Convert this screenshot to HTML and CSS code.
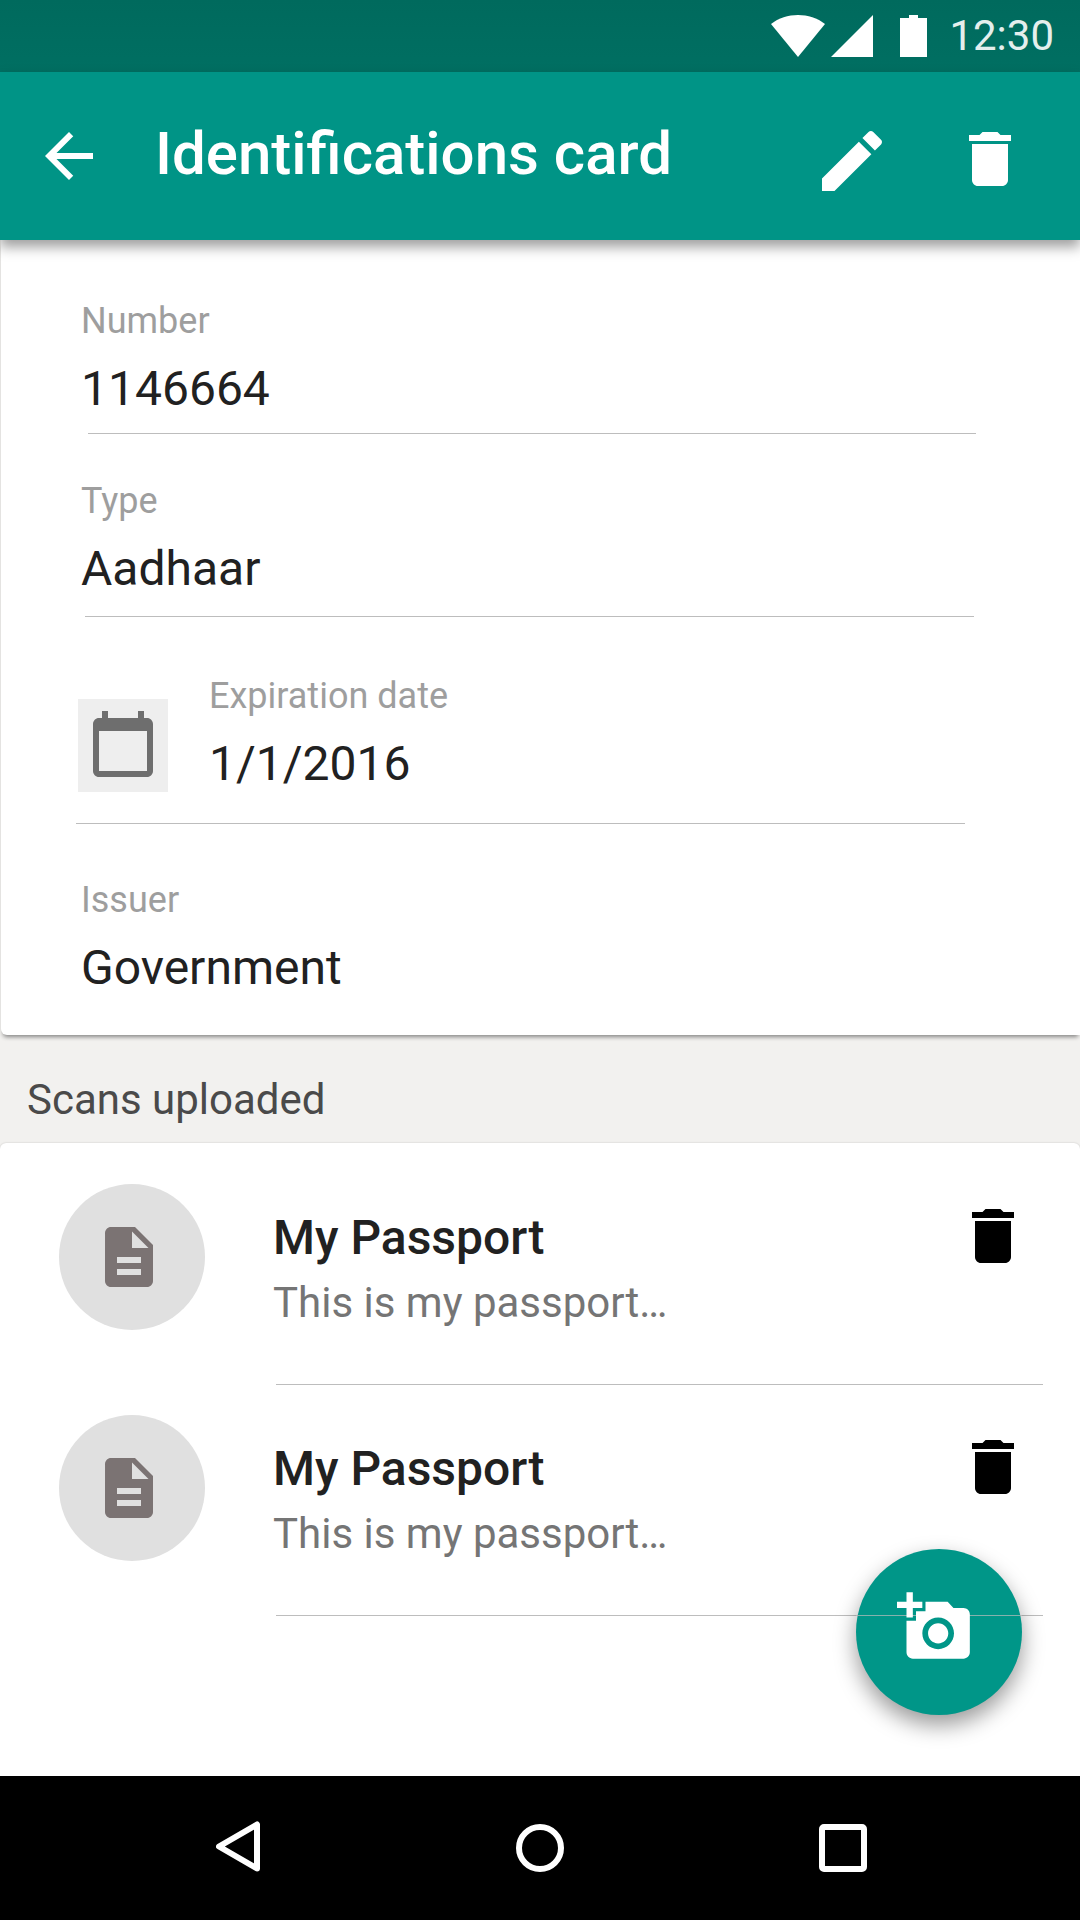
FILE: index.html
```html
<!DOCTYPE html>
<html lang="en">
<head>
    <meta charset="UTF-8">
    <meta name="viewport" content="width=device-width, initial-scale=1.0">
    <title>Identifications card</title>
    <link rel="stylesheet" href="styles.css">
</head>
<body>
    <div class="phone">
        <div class="status-bar">
            <svg class="status-wifi" viewBox="0 0 54 42"><path d="M0 9C15-3 39-3 54 9L27 42z"/></svg>
            <svg class="status-signal" viewBox="0 0 42 42"><path d="M42 0V42H0z"/></svg>
            <svg class="status-battery" viewBox="0 0 27 42"><path d="M9 0H18V3H27V42H0V3H9z"/></svg>
            <span class="status-time">12:30</span>
        </div>

        <header class="app-bar">
            <svg class="icon back-icon" viewBox="0 0 24 24"><path d="M20 11H7.83l5.59-5.59L12 4l-8 8 8 8 1.41-1.41L7.83 13H20v-2z"/></svg>
            <h1>Identifications card</h1>
            <svg class="icon edit-icon" viewBox="0 0 24 24"><path d="M3 17.25V21h3.75L17.81 9.94l-3.75-3.75L3 17.25zM20.71 7.04c.39-.39.39-1.02 0-1.41l-2.34-2.34c-.39-.39-1.02-.39-1.41 0l-1.83 1.83 3.75 3.75 1.83-1.83z"/></svg>
            <svg class="icon trash-icon" viewBox="0 0 24 24"><path d="M6 19c0 1.1.9 2 2 2h8c1.1 0 2-.9 2-2V7H6v12zM19 4h-3.5l-1-1h-5l-1 1H5v2h14V4z"/></svg>
        </header>

        <section class="details">
            <div class="field field-number">
                <div class="label">Number</div>
                <div class="value">1146664</div>
            </div>
            <div class="rule rule-number"></div>

            <div class="field field-type">
                <div class="label">Type</div>
                <div class="value">Aadhaar</div>
            </div>
            <div class="rule rule-type"></div>

            <div class="date-row">
                <div class="date-button">
                    <svg viewBox="0 0 60 66"><path d="M9 0H15V7H45V0H51V7H54C57.300 7 60 9.700 60 13V60C60 63.300 57.300 66 54 66H6C2.700 66 0 63.300 0 60V13C0 9.700 2.700 7 6 7H9zM6 20V60H54V20z"/></svg>
                </div>
                <div class="field">
                    <div class="label">Expiration date</div>
                    <div class="value">1/1/2016</div>
                </div>
            </div>
            <div class="rule rule-date"></div>

            <div class="field field-issuer">
                <div class="label">Issuer</div>
                <div class="value">Government</div>
            </div>
        </section>

        <h2 class="scans-title">Scans uploaded</h2>

        <section class="scans">
            <div class="scan">
                <div class="scan-row">
                    <div class="avatar">
                        <svg viewBox="0 0 24 24"><path d="M14 2H6c-1.100 0-1.990.9-1.990 2L4 20c0 1.100.89 2 1.990 2H18c1.100 0 2-.9 2-2V8l-6-6zm2 16H8v-2h8v2zm0-4H8v-2h8v2zm-3-5V3.500L18.500 9H13z"/></svg>
                    </div>
                    <div class="scan-text">
                        <div class="scan-name">My Passport</div>
                        <div class="scan-note">This is my passport…</div>
                    </div>
                    <svg class="icon scan-delete" viewBox="0 0 24 24"><path d="M6 19c0 1.100.9 2 2 2h8c1.100 0 2-.9 2-2V7H6v12zM19 4h-3.500l-1-1h-5l-1 1H5v2h14V4z"/></svg>
                </div>
                <div class="rule rule-scan"></div>
            </div>
            <div class="scan">
                <div class="scan-row">
                    <div class="avatar">
                        <svg viewBox="0 0 24 24"><path d="M14 2H6c-1.100 0-1.990.9-1.990 2L4 20c0 1.100.89 2 1.990 2H18c1.100 0 2-.9 2-2V8l-6-6zm2 16H8v-2h8v2zm0-4H8v-2h8v2zm-3-5V3.500L18.500 9H13z"/></svg>
                    </div>
                    <div class="scan-text">
                        <div class="scan-name">My Passport</div>
                        <div class="scan-note">This is my passport…</div>
                    </div>
                    <svg class="icon scan-delete" viewBox="0 0 24 24"><path d="M6 19c0 1.100.9 2 2 2h8c1.100 0 2-.9 2-2V7H6v12zM19 4h-3.500l-1-1h-5l-1 1H5v2h14V4z"/></svg>
                </div>
                <div class="rule rule-scan"></div>
            </div>
        </section>

        <div class="fab">
            <svg viewBox="0 0 24 24"><path d="M3 4V1h2v3h3v2H5v3H3V6H0V4h3zm3 6V7h3V4h7l1.830 2H21c1.100 0 2 .9 2 2v12c0 1.100-.9 2-2 2H5c-1.100 0-2-.9-2-2V10h3zm7 9c2.760 0 5-2.240 5-5s-2.240-5-5-5-5 2.240-5 5 2.240 5 5 5zm-3.200-5c0 1.770 1.430 3.200 3.200 3.200s3.200-1.430 3.200-3.200-1.430-3.200-3.200-3.200-3.200 1.430-3.200 3.200z"/></svg>
        </div>

        <nav class="nav-bar">
            <svg class="nav-back" viewBox="0 0 44 51"><path d="M41 3.500V47.500L3 25.500z"/></svg>
            <svg class="nav-home" viewBox="0 0 48 48"><circle cx="24" cy="24" r="21"/></svg>
            <svg class="nav-recent" viewBox="0 0 48 48"><rect x="3" y="3" width="42" height="42" rx="2"/></svg>
        </nav>
    </div>
</body>
</html>
```

FILE: styles.css
```css
* {
    box-sizing: border-box;
}
body {
    margin: 0;
    background: #f2f1ef;
    font-family: 'Roboto', sans-serif;
}
.phone {
    position: relative;
    width: 1080px;
    height: 1920px;
    overflow: hidden;
    display: flex;
    flex-direction: column;
    background: #f2f1ef;
}
svg {
    display: block;
    flex: none;
}
.icon {
    width: 72px;
    height: 72px;
}

/* status bar */
.status-bar {
    height: 72px;
    flex: none;
    padding: 15px 26px 0 0;
    display: flex;
    justify-content: flex-end;
    align-items: flex-start;
    background: linear-gradient(#006a5d, #006f62);
}
.status-bar svg {
    fill: #fff;
    height: 42px;
}
.status-wifi {
    width: 54px;
}
.status-signal {
    width: 42px;
    margin-left: 6px;
}
.status-battery {
    width: 27px;
    margin-left: 27px;
}
.status-time {
    margin-left: 22px;
    margin-top: -4px;
    font-size: 42px;
    line-height: 50px;
    color: #e4efed;
}

/* toolbar */
.app-bar {
    height: 168px;
    flex: none;
    position: relative;
    z-index: 2;
    display: flex;
    background: #009486;
    box-shadow: 0 7px 12px rgba(0, 0, 0, 0.38);
}
.app-bar svg {
    fill: #fff;
}
.back-icon {
    margin: 48px 0 0 33px;
}
.app-bar h1 {
    margin: 51px 0 0 50px;
    width: 533px;
    font-size: 60px;
    line-height: 62px;
    font-weight: 500;
    color: #fff;
    white-space: nowrap;
}
.edit-icon {
    width: 80px;
    height: 80px;
    margin: 49px 0 0 124px;
}
.trash-icon {
    margin: 51px 0 0 62px;
}

/* details card */
.details {
    height: 795px;
    flex: none;
    margin-left: 1px;
    padding-top: 60px;
    background: #fff;
    border-radius: 0 0 0 6px;
    box-shadow: 0 4px 4px -2px rgba(0, 0, 0, 0.45);
    position: relative;
    z-index: 1;
}
.field {
    padding-left: 80px;
}
.label {
    font-size: 36px;
    line-height: 42px;
    color: #9e9e9e;
}
.value {
    margin-top: 17px;
    font-size: 48px;
    line-height: 60px;
    color: #212121;
}
.rule {
    height: 1px;
    background: #bdbdbd;
}
.rule-number {
    margin: 14px 0 0 87px;
    width: 888px;
}
.field-type {
    margin-top: 46px;
}
.rule-type {
    margin: 17px 0 0 84px;
    width: 889px;
}
.date-row {
    display: flex;
    margin-top: 58px;
}
.date-button {
    width: 90px;
    height: 93px;
    margin: 24px 0 0 77px;
    padding: 12px 15px;
    background: #eeeeee;
}
.date-button svg {
    width: 60px;
    height: 66px;
    fill: #6e6e6e;
}
.date-row .field {
    padding-left: 41px;
}
.rule-date {
    margin: 29px 0 0 75px;
    width: 889px;
}
.field-issuer {
    margin-top: 55px;
}

/* scans list */
.scans-title {
    height: 108px;
    flex: none;
    margin: 0;
    padding: 44px 0 0 27px;
    font-size: 42px;
    line-height: 42px;
    font-weight: 400;
    color: #4a4a4a;
}
.scans {
    flex: 1;
    padding-top: 11px;
    background: #fff;
    border-radius: 6px 6px 0 0;
    box-shadow: 0 0 2px rgba(0, 0, 0, 0.2);
}
.scan {
    height: 231px;
    display: flex;
    flex-direction: column;
}
.scan-row {
    flex: 1;
    display: flex;
}
.avatar {
    width: 146px;
    height: 146px;
    margin: 30px 0 0 59px;
    padding: 37px 0 0 34px;
    border-radius: 50%;
    background: #e0e0e0;
}
.avatar svg {
    width: 72px;
    height: 72px;
    fill: #7b7373;
}
.scan-text {
    width: 752px;
    padding: 54px 0 0 68px;
}
.scan-name {
    font-size: 48px;
    line-height: 60px;
    font-weight: 500;
    color: #212121;
}
.scan-note {
    margin-top: 5px;
    font-size: 42px;
    line-height: 60px;
    color: #757575;
}
.scan-delete {
    margin-top: 46px;
    fill: #000;
}
.rule-scan {
    flex: none;
    margin-left: 276px;
    width: 767px;
}

/* add button */
.fab {
    position: absolute;
    left: 856px;
    top: 1549px;
    width: 166px;
    height: 166px;
    padding: 40px 0 0 41px;
    border-radius: 50%;
    background: #009688;
    box-shadow: 0 10px 22px rgba(0, 0, 0, 0.4);
}
.fab::before {
    content: "";
    position: absolute;
    left: 0;
    right: 0;
    top: 66px;
    height: 1px;
    background: rgba(189, 189, 189, 0.7);
}
.fab svg {
    position: relative;
    width: 76px;
    height: 76px;
    fill: #fff;
}

/* system nav */
.nav-bar {
    height: 144px;
    flex: none;
    position: relative;
    z-index: 2;
    display: flex;
    align-items: flex-start;
    padding: 45px 0 0 216px;
    background: #000;
}
.nav-bar svg {
    fill: none;
    stroke: #fff;
    stroke-width: 6;
    stroke-linejoin: round;
}
.nav-back {
    width: 44px;
    height: 51px;
}
.nav-home {
    width: 48px;
    height: 48px;
    margin: 3px 0 0 256px;
}
.nav-recent {
    width: 48px;
    height: 48px;
    margin: 3px 0 0 255px;
}
```
